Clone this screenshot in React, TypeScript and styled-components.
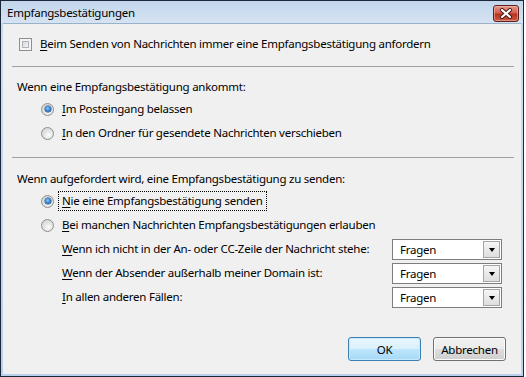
import React from "react";
import styled, { createGlobalStyle } from "styled-components";

const Global = createGlobalStyle`
  html, body { margin: 0; padding: 0; background: #ffffff; }
  body {
    font-family: "Noto Sans", "Open Sans", sans-serif;
    font-size: 11.5px;
    letter-spacing: -0.25px;
    color: #000;
  }
  #root { width: 526px; height: 377px; }
`;

const Window = styled.div`
  box-sizing: border-box;
  width: 524px;
  height: 377px;
  border: 1px solid #1b2738;
  background: linear-gradient(#bdd2ea, #cbdcef 40px, #b9d1ea);
  display: flex;
  flex-direction: column;
  padding: 0 2px 2px 2px;
`;

const TitleBar = styled.div`
  height: 22px;
  flex: none;
  display: flex;
  align-items: center;
  justify-content: space-between;
  background: linear-gradient(#c3d6ec, #d5e3f2);
  margin: 0 -2px;
  padding-left: 6px;
  padding-right: 4px;
`;

const Title = styled.span`
  line-height: 16px;
  padding-top: 1px;
`;

const CloseBtn = styled.div`
  box-sizing: border-box;
  width: 26px;
  height: 17px;
  margin-top: 2px;
  border: 1px solid #5e1f1a;
  border-radius: 3px;
  background: linear-gradient(#e0998c, #d0604f 45%, #b8321f 55%, #c95a44);
  box-shadow: inset 0 0 0 1px rgba(255, 200, 190, 0.5);
  display: flex;
  align-items: center;
  justify-content: center;
`;

const Client = styled.div`
  flex: 1;
  background: #f0f0f0;
  border-top: 1px solid #98b2cc;
  display: flex;
  flex-direction: column;
  padding: 0 0 13px 9px;
`;

const Row = styled.div<{ $h?: number; $indent?: number; $mt?: number }>`
  display: flex;
  align-items: center;
  height: ${(p) => p.$h ?? 24}px;
  padding-left: ${(p) => p.$indent ?? 0}px;
  margin-top: ${(p) => p.$mt ?? 0}px;
  white-space: nowrap;
`;

const Separator = styled.div<{ $mt: number }>`
  height: 1px;
  background: #a0a0a0;
  margin-top: ${(p) => p.$mt}px;
  margin-right: 7px;
`;

const Label = styled.span<{ $focus?: boolean }>`
  line-height: 16px;
  padding: 1px 3px;
  margin-left: 5px;
  outline: ${(p) => (p.$focus ? "1px dotted #000" : "none")};
`;

const Plain = styled.span<{ $w?: number }>`
  line-height: 16px;
  width: ${(p) => (p.$w ? `${p.$w}px` : "auto")};
  flex: none;
`;

const Acc = styled.u`
  text-decoration: underline;
  text-underline-offset: 2px;
`;

const CheckBox = styled.span`
  box-sizing: border-box;
  width: 13px;
  height: 13px;
  border: 1px solid #8e8f8f;
  background: #f4f4f4;
  position: relative;
  flex: none;
  &::after {
    content: "";
    position: absolute;
    inset: 2px;
    border: 1px solid #aeb3b9;
    background: linear-gradient(135deg, #d6d8db, #f7f7f7);
  }
`;

const Radio = styled.span<{ $on?: boolean }>`
  box-sizing: border-box;
  width: 13px;
  height: 13px;
  border-radius: 50%;
  border: 1px solid #8e8f8f;
  background: radial-gradient(circle at 60% 65%, #ffffff 0%, #e6e6e6 40%, #cfcfcf 100%);
  position: relative;
  flex: none;
  &::after {
    content: "";
    display: ${(p) => (p.$on ? "block" : "none")};
    position: absolute;
    left: 2.5px;
    top: 2.5px;
    width: 6px;
    height: 6px;
    border-radius: 50%;
    background: radial-gradient(circle at 45% 40%, #8fd0ff 0%, #2f7fd2 50%, #0d3f86 100%);
    box-shadow: 0 0 0 0.5px #1b4070;
  }
`;

const Select = styled.div`
  box-sizing: border-box;
  width: 110px;
  height: 21px;
  border: 1px solid #7d7d7d;
  background: #fff;
  display: flex;
  align-items: center;
  justify-content: space-between;
  padding: 0 1px 0 7px;
  flex: none;
`;

const ArrowBox = styled.span`
  box-sizing: border-box;
  width: 17px;
  height: 17px;
  border: 1px solid #a5a5a5;
  background: linear-gradient(#f6f6f6, #dedede);
  display: flex;
  align-items: center;
  justify-content: center;
`;

const Tri = styled.span`
  width: 0;
  height: 0;
  border-left: 3.5px solid transparent;
  border-right: 3.5px solid transparent;
  border-top: 4px solid #000;
  margin-top: 1px;
`;

const Buttons = styled.div`
  display: flex;
  justify-content: flex-end;
  gap: 12px;
  margin-top: auto;
  padding-right: 15px;
`;

const Button = styled.button<{ $default?: boolean }>`
  box-sizing: border-box;
  width: 73px;
  height: 24px;
  font-family: inherit;
  font-size: 11.5px;
  letter-spacing: -0.25px;
  color: #000;
  border-radius: 3px;
  border: 1px solid ${(p) => (p.$default ? "#3c7fb1" : "#707070")};
  background: ${(p) =>
    p.$default
      ? "linear-gradient(#eaf6fd 0%, #d9f0fc 50%, #bee6fd 51%, #a7d9f5 100%)"
      : "linear-gradient(#f2f2f2 0%, #ebebeb 50%, #dddddd 51%, #cfcfcf 100%)"};
  box-shadow: inset 0 0 0 1px ${(p) => (p.$default ? "#c5e9fd" : "#fcfcfc")};
  padding: 0;
`;

const SubRow = ({ label, acc }: { label: string; acc: string }) => (
  <Row $indent={50}>
    <Plain $w={330}>
      <Acc>{acc}</Acc>
      {label}
    </Plain>
    <Select>
      <span>Fragen</span>
      <ArrowBox>
        <Tri />
      </ArrowBox>
    </Select>
  </Row>
);

export default function App() {
  return (
    <>
      <Global />
      <Window>
        <TitleBar>
          <Title>Empfangsbestätigungen</Title>
          <CloseBtn>
            <svg width="14" height="11" viewBox="0 0 14 11">
              <path d="M3 2 L11 9 M11 2 L3 9" stroke="#4a1510" strokeWidth="4" strokeLinecap="round" />
              <path d="M3 2 L11 9 M11 2 L3 9" stroke="#ffffff" strokeWidth="2.2" strokeLinecap="round" />
            </svg>
          </CloseBtn>
        </TitleBar>
        <Client>
          <Row $h={20} $mt={10} $indent={7}>
            <CheckBox />
            <Label>
              <Acc>B</Acc>eim Senden von Nachrichten immer eine Empfangsbestätigung anfordern
            </Label>
          </Row>
          <Separator $mt={12} />
          <Row $h={20} $mt={10} $indent={5}>
            <Plain>Wenn eine Empfangsbestätigung ankommt:</Plain>
          </Row>
          <Row $indent={29}>
            <Radio $on />
            <Label>
              <Acc>I</Acc>m Posteingang belassen
            </Label>
          </Row>
          <Row $indent={29}>
            <Radio />
            <Label>
              <Acc>I</Acc>n den Ordner für gesendete Nachrichten verschieben
            </Label>
          </Row>
          <Separator $mt={12} />
          <Row $h={20} $mt={11} $indent={5}>
            <Plain>Wenn aufgefordert wird, eine Empfangsbestätigung zu senden:</Plain>
          </Row>
          <Row $indent={29}>
            <Radio $on />
            <Label $focus>
              <Acc>N</Acc>ie eine Empfangsbestätigung senden
            </Label>
          </Row>
          <Row $indent={29}>
            <Radio />
            <Label>
              <Acc>B</Acc>ei manchen Nachrichten Empfangsbestätigungen erlauben
            </Label>
          </Row>
          <SubRow acc="W" label="enn ich nicht in der An- oder CC-Zeile der Nachricht stehe:" />
          <SubRow acc="W" label="enn der Absender außerhalb meiner Domain ist:" />
          <SubRow acc="I" label="n allen anderen Fällen:" />
          <Buttons>
            <Button $default>OK</Button>
            <Button>Abbrechen</Button>
          </Buttons>
        </Client>
      </Window>
    </>
  );
}
